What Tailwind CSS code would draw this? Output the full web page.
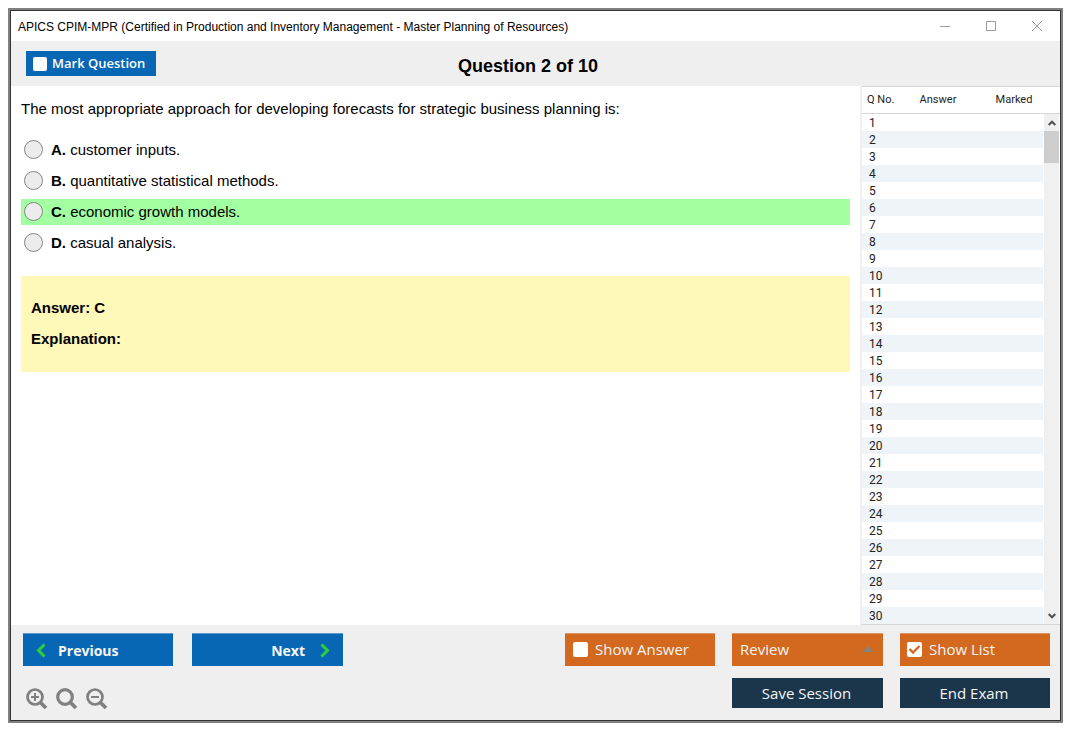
<!DOCTYPE html>
<html lang="en">
<head>
    <meta charset="UTF-8">
    <meta name="viewport" content="width=device-width, initial-scale=1.0">
    <script src="https://cdn.jsdelivr.net/npm/@tailwindcss/browser@4"></script>
    <title>APICS CPIM-MPR Exam</title>
</head>
<body class="h-screen flex flex-col bg-white pt-2 pl-2 pr-3 pb-3 text-black font-['Liberation_Sans',Arial,sans-serif]">
  <div class="flex-1 min-h-0 border-2 border-[#808080]">
    <div class="h-full flex flex-col border border-[#333333] bg-[#efefef]">

      <!-- Title bar -->
      <header class="h-[30px] shrink-0 flex items-center justify-between bg-white pl-[7px] pr-[15px]">
        <h1 class="text-[12px] pt-px">APICS CPIM-MPR (Certified in Production and Inventory Management - Master Planning of Resources)</h1>
        <div class="flex items-center gap-[30px] text-[#999999]">
          <button aria-label="Minimize">
            <svg class="block w-4 h-3" viewBox="0 0 16 12" fill="none" stroke="currentColor"><path d="M3 6.5h10"/></svg>
          </button>
          <button aria-label="Maximize">
            <svg class="block w-4 h-3" viewBox="0 0 16 12" fill="none" stroke="currentColor"><path d="M3.5 1.500h9v9h-9z"/></svg>
          </button>
          <button aria-label="Close">
            <svg class="block w-4 h-3" viewBox="0 0 16 12" fill="none" stroke="currentColor"><path d="M3 1l10 10M13 1L3 11"/></svg>
          </button>
        </div>
      </header>

      <!-- Question header -->
      <div class="h-[45px] shrink-0 grid grid-cols-[1fr_auto_1fr] items-center pl-[15px] pr-[30px]">
        <label class="justify-self-start h-[25px] flex items-center gap-[5px] px-[7px] w-[130px] bg-[#0867b5] text-white text-[13px] font-semibold font-['Open_Sans',sans-serif]">
          <input type="checkbox" class="appearance-none w-[14px] h-[14px] rounded-xs bg-white">
          Mark Question
        </label>
        <h2 class="text-[18px] font-bold pt-[5px]">Question 2 of 10</h2>
      </div>

      <div class="flex-1 min-h-0 flex">
        <!-- Question -->
        <main class="flex-1 min-w-0 bg-white px-[10px] pt-[14px] text-[15px] leading-[18px]">
          <p>The most appropriate approach for developing forecasts for strategic business planning is:</p>
          <div class="mt-[19px] flex flex-col gap-[5px]">
            <label class="h-[26px] flex items-center gap-2 pl-[3px]">
              <input type="radio" name="choice" value="A" class="appearance-none w-[19px] h-[19px] mb-px rounded-full border border-[#858585] bg-[#ececec] checked:border-4">
              <span><b>A.</b> customer inputs.</span>
            </label>
            <label class="h-[26px] flex items-center gap-2 pl-[3px]">
              <input type="radio" name="choice" value="B" class="appearance-none w-[19px] h-[19px] mb-px rounded-full border border-[#858585] bg-[#ececec] checked:border-4">
              <span><b>B.</b> quantitative statistical methods.</span>
            </label>
            <label class="h-[26px] flex items-center gap-2 pl-[3px] bg-[#a2ffa2]">
              <input type="radio" name="choice" value="C" class="appearance-none w-[19px] h-[19px] mb-px rounded-full border border-[#858585] bg-[#ececec] checked:border-4">
              <span><b>C.</b> economic growth models.</span>
            </label>
            <label class="h-[26px] flex items-center gap-2 pl-[3px]">
              <input type="radio" name="choice" value="D" class="appearance-none w-[19px] h-[19px] mb-px rounded-full border border-[#858585] bg-[#ececec] checked:border-4">
              <span><b>D.</b> casual analysis.</span>
            </label>
          </div>
          <div class="mt-5 bg-[#fef8b9] px-[10px] pt-[23px] pb-6 font-bold">
            <p>Answer: C</p>
            <p class="mt-[13px]">Explanation:</p>
          </div>
        </main>

        <!-- Question list -->
        <aside class="relative w-[200px] shrink-0 overflow-hidden border-l-2 border-b border-l-[#f0f0f0] border-b-[#d5d5d5] bg-white text-[#222222] font-[Roboto,sans-serif] text-[12px]">
          <table class="w-full table-fixed border-separate border-spacing-0">
            <thead>
              <tr class="text-[11px] leading-[26px]">
                <th class="w-[39px] p-0 pl-[5px] border-y border-[#d5d5d5] text-left font-normal">Q No.</th>
                <th class="w-[74px] p-0 border-y border-[#d5d5d5] font-normal">Answer</th>
                <th class="w-[85px] p-0 pr-[7px] border-y border-[#d5d5d5] font-normal">Marked</th>
              </tr>
            </thead>
            <tbody id="list"></tbody>
          </table>
          <!-- Scroll bar -->
          <div class="absolute top-7 right-0 bottom-0 w-[17px] flex flex-col items-center border-x border-white bg-[#f0f0f0]">
            <button class="h-[17px] w-full grid place-items-center" aria-label="Scroll up">
              <svg class="w-2 h-2" viewBox="0 0 8 8" fill="none" stroke="#505050" stroke-width="2"><path d="M.7 6L4 2.700 7.300 6"/></svg>
            </button>
            <div class="w-full h-8 bg-[#cdcdcd]"></div>
            <button class="mt-auto h-[17px] w-full grid place-items-center" aria-label="Scroll down">
              <svg class="w-2 h-2" viewBox="0 0 8 8" fill="none" stroke="#505050" stroke-width="2"><path d="M.7 2L4 5.300 7.300 2"/></svg>
            </button>
          </div>
        </aside>
      </div>

      <!-- Buttons -->
      <footer class="shrink-0 flex flex-col gap-3 pt-2 pb-3 pl-3 pr-[10px] text-[15px] font-['Open_Sans',sans-serif] text-[#f5f5f5]">
        <div class="flex h-[33px]">
          <button class="w-[150px] flex items-center gap-3 pl-[13px] bg-[#0867b5] border-t border-[#5b9bd0] text-[14px] font-bold">
            <svg class="w-[10px] h-[15px]" viewBox="0 0 10 15" fill="none" stroke="#2bd03a" stroke-width="3"><path d="M8.500 1.500L2.500 7.500l6 6"/></svg>
            Previous
          </button>
          <button class="ml-[19px] w-[151px] flex items-center justify-end gap-[15px] pr-[13px] bg-[#0867b5] border-t border-[#5b9bd0] text-[14px] font-bold">
            Next
            <svg class="w-[10px] h-[15px]" viewBox="0 0 10 15" fill="none" stroke="#2bd03a" stroke-width="3"><path d="M1.500 1.500l6 6-6 6"/></svg>
          </button>
          <div class="ml-auto flex gap-[17px]">
            <label class="w-[150px] flex items-center gap-[7px] pl-[8px] pb-[2px] bg-[#d2691e] border-t border-[#dd9565]">
              <input type="checkbox" class="appearance-none w-[15px] h-[15px] rounded-xs bg-white">
              Show Answer
            </label>
            <div class="relative w-[151px]">
              <select aria-label="Review" class="appearance-none w-full h-full pl-2 pb-[2px] bg-[#d2691e] border-t border-[#dd9565]">
                <option>Review</option>
              </select>
              <svg class="absolute right-[9px] top-[13px] w-3 h-[6px]" viewBox="0 0 12 6" fill="#8b8378"><path d="M0 6L6 0l6 6z"/></svg>
            </div>
            <label class="w-[150px] flex items-center gap-[7px] pl-[7px] pb-[2px] bg-[#d2691e] border-t border-[#dd9565]">
              <span class="grid">
                <input type="checkbox" checked class="col-start-1 row-start-1 appearance-none w-[15px] h-[15px] rounded-xs bg-white">
                <svg class="col-start-1 row-start-1 w-[15px] h-[15px] pointer-events-none" viewBox="0 0 15 15" fill="none" stroke="#d2691e" stroke-width="2.400"><path d="M2.500 7l3.500 3.500 6.500-6.500"/></svg>
              </span>
              Show List
            </label>
          </div>
        </div>
        <div class="flex h-[30px]">
          <div class="flex items-start gap-2 pl-[3px] pt-[10px] text-[#808080]">
            <button aria-label="Zoom in">
              <svg class="block w-[22px] h-[22px]" viewBox="0 0 22 22" fill="none" stroke="currentColor"><circle cx="9" cy="9" r="7.500" stroke-width="2.700"/><path d="M14.500 14.500l5.500 5.500" stroke-width="3.800"/><path d="M5 9h8M9 5v8" stroke-width="2"/></svg>
            </button>
            <button aria-label="Reset zoom">
              <svg class="block w-[22px] h-[22px]" viewBox="0 0 22 22" fill="none" stroke="currentColor"><circle cx="9" cy="9" r="7.300" stroke-width="3.200"/><path d="M14.500 14.500l5.500 5.500" stroke-width="3.800"/></svg>
            </button>
            <button aria-label="Zoom out">
              <svg class="block w-[22px] h-[22px]" viewBox="0 0 22 22" fill="none" stroke="currentColor"><circle cx="9" cy="9" r="7.500" stroke-width="2.700"/><path d="M14.500 14.500l5.500 5.500" stroke-width="3.800"/><path d="M5 9h8" stroke-width="2"/></svg>
            </button>
          </div>
          <div class="ml-auto flex gap-[17px]">
            <button class="w-[151px] pr-[2px] bg-[#1b354a]">Save Session</button>
            <button class="w-[150px] pr-[2px] bg-[#1b354a]">End Exam</button>
          </div>
        </div>
      </footer>
    </div>
  </div>

  <script>
    const list = document.getElementById("list");
    for (let i = 1; i <= 30; i++) {
      const row = document.createElement("tr");
      row.className = "leading-[16px] even:bg-[#eff4f9]";
      row.innerHTML = `<td class="p-0 pt-px pl-[7px]">${i}</td><td></td><td></td>`;
      list.appendChild(row);
    }
  </script>
</body>
</html>
